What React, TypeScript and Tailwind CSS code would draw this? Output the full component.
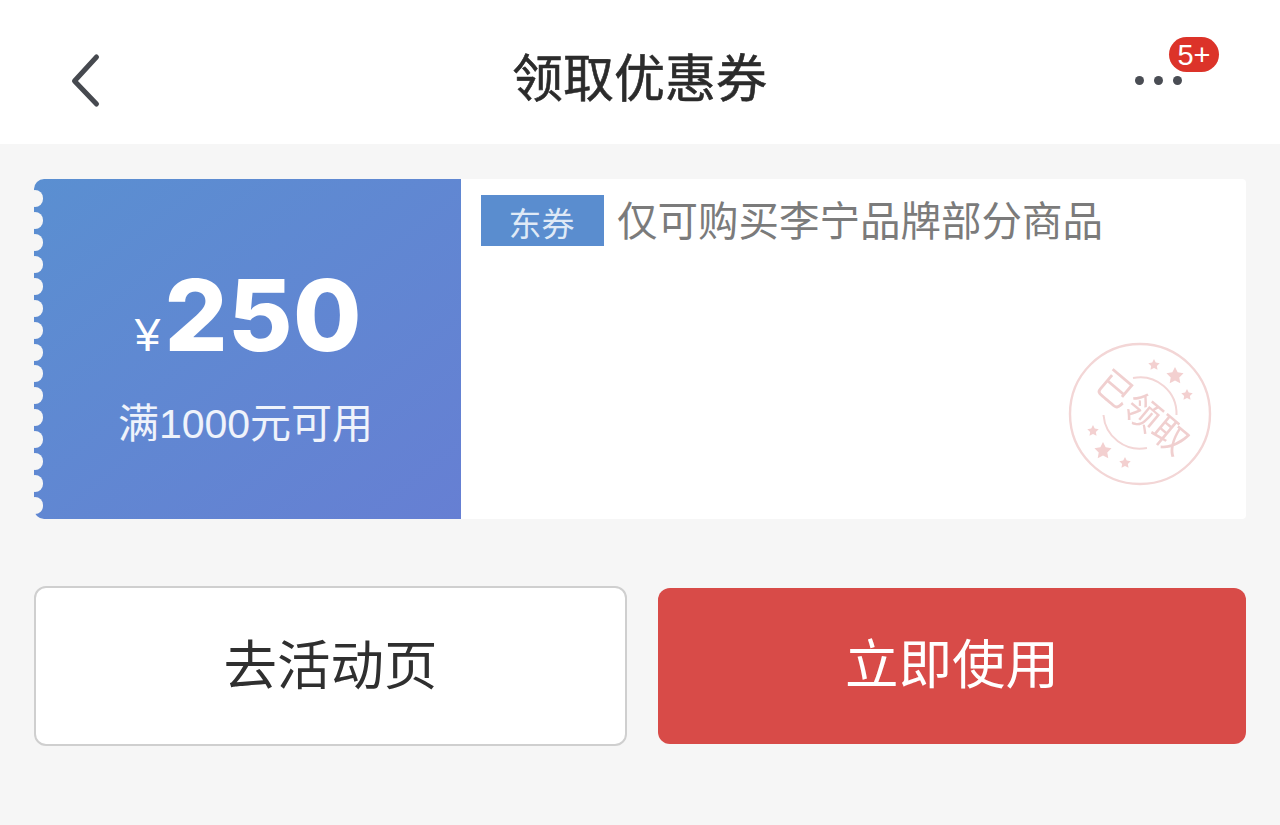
const font = "font-['Liberation_Sans','Noto_Sans_CJK_SC',sans-serif]";

const scallops = Array.from({ length: 15 }, (_, i) => Math.round(198 + i * 21.93));

function Star({ x, y, r }: { x: number; y: number; r: number }) {
  const points: string[] = [];
  for (let i = 0; i < 10; i++) {
    const rad = i % 2 === 0 ? r : r * 0.5;
    const a = -Math.PI / 2 + (i * Math.PI) / 5;
    points.push(`${x + rad * Math.cos(a)},${y + rad * Math.sin(a)}`);
  }
  return <polygon points={points.join(" ")} fill="#f3d0d0" />;
}

function Stamp() {
  return (
    <div className="absolute right-[34px] bottom-[33px] w-[144px] h-[144px] blur-[0.5px]">
      <svg viewBox="0 0 144 144" className="w-full h-full">
        <circle cx="72" cy="72" r="70" fill="none" stroke="#f3d6d6" strokeWidth="2.4" />
        <path d="M65 36 A36.5 36.5 0 0 1 108.5 73" fill="none" stroke="#f3d6d6" strokeWidth="2" />
        <path d="M35.5 73 A36.5 36.5 0 0 0 79 106" fill="none" stroke="#f3d6d6" strokeWidth="2" />
        <Star x={86} y={23} r={6} />
        <Star x={107} y={34} r={9} />
        <Star x={119} y={53} r={6} />
        <Star x={25} y={89} r={6} />
        <Star x={35} y={109} r={9} />
        <Star x={57} y={121} r={6} />
      </svg>
      <div className="absolute inset-0 flex items-center justify-center">
        <span className="rotate-[40deg] text-[36px] leading-none whitespace-nowrap text-[#f0cfcf] translate-x-[2px] translate-y-[-1px]">
          已领取
        </span>
      </div>
    </div>
  );
}

export default function App() {
  return (
    <div className={`relative w-[1280px] h-[825px] bg-[#f6f6f6] overflow-hidden ${font}`}>
      <header className="h-[144px] bg-white grid grid-cols-[1fr_auto_1fr] items-center px-[70px]">
        <svg width="36" height="60" viewBox="0 0 36 60" className="mt-[20px] -ml-[1px] justify-self-start">
          <path d="M27.5 5 L5.5 29 L27.5 52" fill="none" stroke="#46494f" strokeWidth="5" strokeLinecap="round" strokeLinejoin="round" />
        </svg>
        <h1 className="text-[51px] leading-none font-normal text-[#2b2b2b] mt-[14px] -ml-[1px] [-webkit-text-stroke:0.6px_#2b2b2b]">领取优惠券</h1>
        <div className="relative w-[60px] h-[60px] justify-self-end">
          <div className="absolute -left-[15px] top-[34px] flex gap-[10px]">
            <span className="w-[9px] h-[9px] rounded-full bg-[#4a4d54]" />
            <span className="w-[9px] h-[9px] rounded-full bg-[#4a4d54]" />
            <span className="w-[9px] h-[9px] rounded-full bg-[#4a4d54]" />
          </div>
          <div className="absolute left-[19px] -top-[5px] w-[50px] h-[35px] rounded-full bg-[#dc3329] text-white text-[29px] leading-[37px] text-center">
            5+
          </div>
        </div>
      </header>

      <main className="pt-[35px] px-[34px]">
        <section className="relative h-[340px] flex bg-white rounded-[4px] rounded-l-[10px] overflow-hidden">
          <div className="w-[427px] flex flex-col items-center bg-gradient-to-br from-[#5a8fd1] to-[#667fd3] text-white">
            <div className="flex items-baseline h-[116px] mt-[78px] ml-[2px]">
              <span className="text-[46px] font-normal mr-[4px] leading-none">¥</span>
              <span className="font-['Inter'] text-[99px] font-extrabold leading-[116px] tracking-[0.5px]">250</span>
            </div>
            <div className="text-[41px] leading-none mt-[31px] text-white/90 ml-[-4px]">满1000元可用</div>
          </div>
          <div className="flex-1 pl-[20px] pt-[16px] flex items-start">
            <span className="w-[123px] h-[51px] pr-[2px] bg-[#5a8dcf] text-[#dfe9f6] text-[33px] leading-[60px] text-center">东券</span>
            <span className="ml-[13px] text-[40.5px] leading-[54px] text-[#7b7b7b] whitespace-nowrap">仅可购买李宁品牌部分商品</span>
          </div>
          <Stamp />
        </section>

        <div className="mt-[67px] flex gap-[31px] items-start">
          <button className="w-[593px] h-[160px] bg-white border-2 border-[#cfcfcf] rounded-[12px] text-[53.5px] text-[#2f2f2f] pt-[2px]">去活动页</button>
          <button className="w-[588px] h-[156px] mt-[2px] bg-[#d84b48] rounded-[12px] text-[53.5px] text-white">立即使用</button>
        </div>
      </main>

      {scallops.map((y) => (
        <span key={y} className="absolute left-[27px] w-[16px] h-[17px] rounded-full bg-[#f6f6f6]" style={{ top: y - 8 }} />
      ))}
    </div>
  );
}
